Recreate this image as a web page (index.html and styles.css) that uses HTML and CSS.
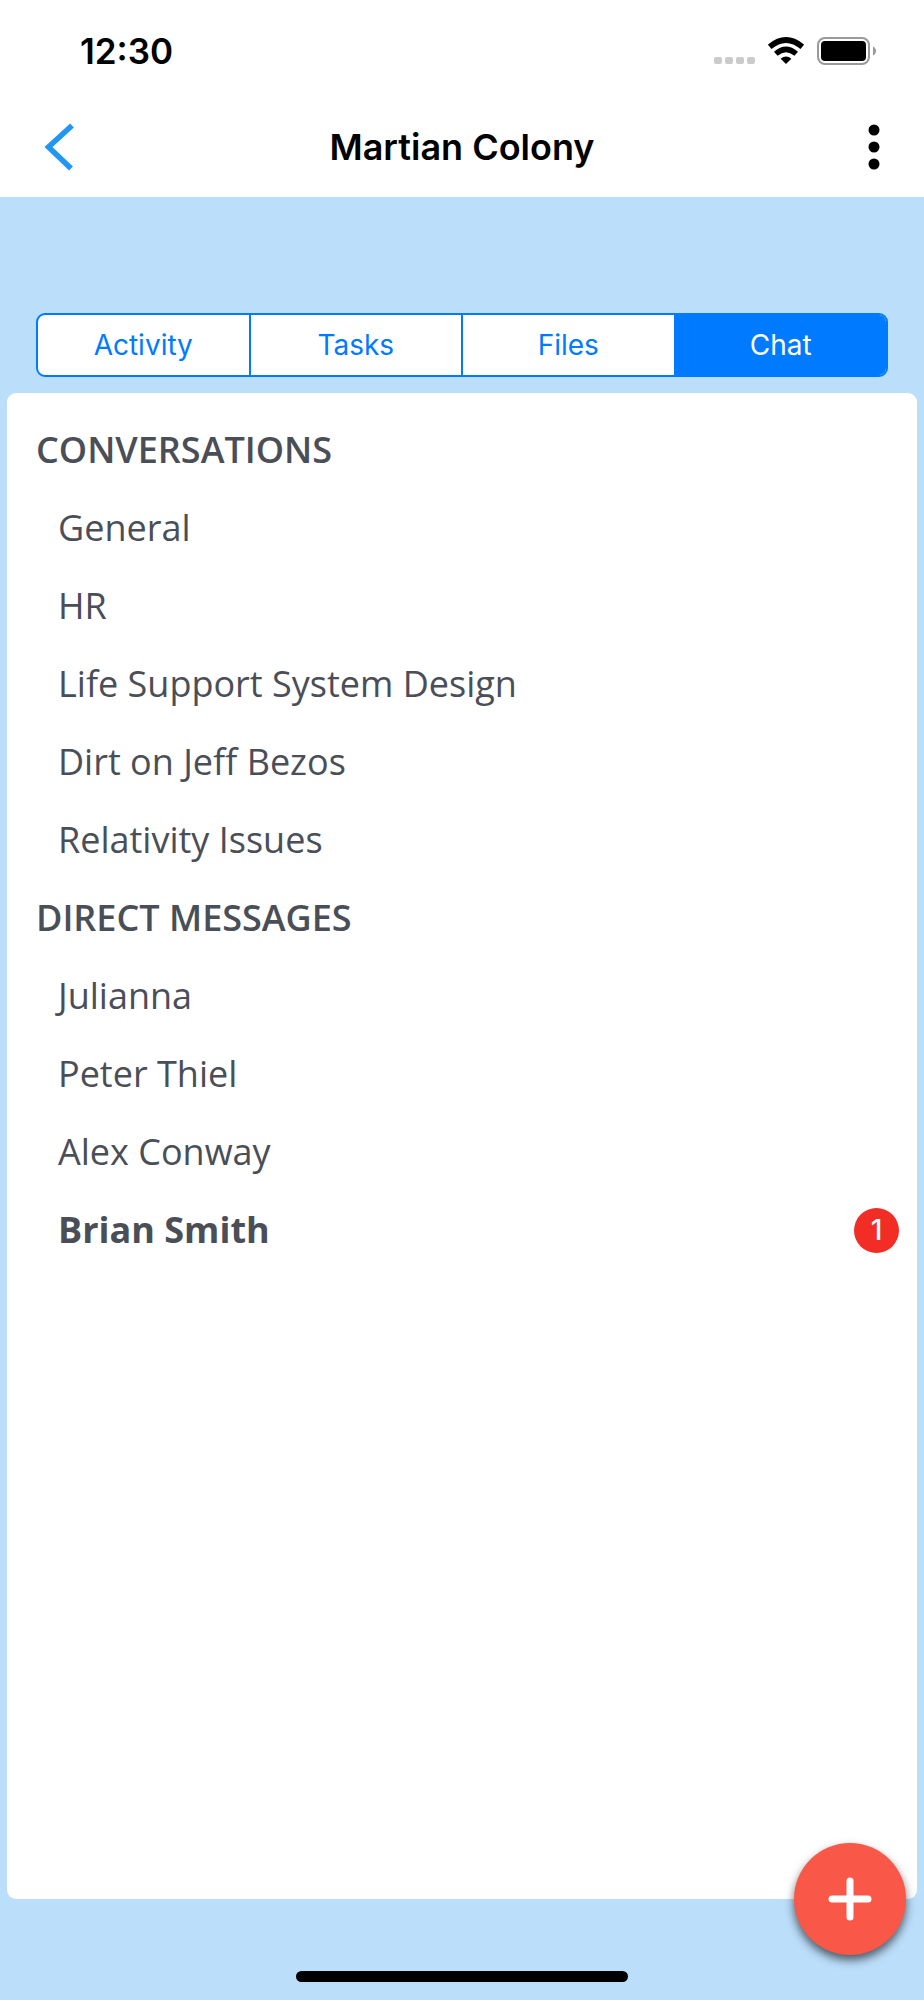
FILE: index.html
```html
<!DOCTYPE html>
<html lang="en">
<head>
    <meta charset="UTF-8">
    <meta name="viewport" content="width=device-width, initial-scale=1.0">
    <title>Martian Colony</title>
    <link rel="stylesheet" href="styles.css">
</head>
<body>

<div class="screen">
    <!-- Status bar -->
    <div class="status-bar">
        <span class="time">12:30</span>
        <div class="status-icons">
            <svg width="41" height="8" viewBox="0 0 41 8" fill="#cbcbcb">
                <rect x="0" y="0" width="8" height="7" rx="2"/>
                <rect x="11" y="0" width="8" height="7" rx="2"/>
                <rect x="22" y="0" width="8" height="7" rx="2"/>
                <rect x="33" y="0" width="8" height="7" rx="2"/>
            </svg>
            <svg width="36" height="28" viewBox="0 0 36 28">
                <path d="M1.7 9.8 Q18 -3.8 34.3 9.8" fill="none" stroke="#000" stroke-width="5.6"/>
                <path d="M7.8 16.8 Q18 8 28.2 16.8" fill="none" stroke="#000" stroke-width="5.4"/>
                <path d="M18 27 L12.6 21.8 Q18 17 23.4 21.8 Z"/>
            </svg>
            <svg width="59" height="28" viewBox="0 0 59 28">
                <rect x="1" y="1" width="51" height="26" rx="7" fill="none" stroke="#9a9a9a" stroke-width="2"/>
                <rect x="4" y="4" width="45" height="20" rx="4"/>
                <path d="M56 9.5 Q59 11 59 14 Q59 17 56 18.5 Z" fill="#9a9a9a"/>
            </svg>
        </div>
    </div>

    <!-- Header -->
    <header class="header">
        <button class="icon-btn" aria-label="Back">
            <svg width="30" height="48" viewBox="0 0 30 48">
                <path d="M28 2.5 L4.5 24 L27 45.5" fill="none" stroke="#2196f3" stroke-width="5.5"/>
            </svg>
        </button>
        <h1>Martian Colony</h1>
        <button class="icon-btn" aria-label="More">
            <svg width="12" height="46" viewBox="0 0 12 46">
                <circle cx="6" cy="6" r="5.5"/>
                <circle cx="6" cy="23" r="5.5"/>
                <circle cx="6" cy="40" r="5.5"/>
            </svg>
        </button>
    </header>

    <!-- Tabs -->
    <nav class="tabs">
        <button class="tab">Activity</button>
        <button class="tab">Tasks</button>
        <button class="tab">Files</button>
        <button class="tab active">Chat</button>
    </nav>

    <!-- Chat list -->
    <main class="panel">
        <section class="group">
            <h2>CONVERSATIONS</h2>
            <ul>
                <li><a href="#">General</a></li>
                <li><a href="#">HR</a></li>
                <li><a href="#">Life Support System Design</a></li>
                <li><a href="#">Dirt on Jeff Bezos</a></li>
                <li><a href="#">Relativity Issues</a></li>
            </ul>
        </section>
        <section class="group">
            <h2>DIRECT MESSAGES</h2>
            <ul>
                <li><a href="#">Julianna</a></li>
                <li><a href="#">Peter Thiel</a></li>
                <li><a href="#">Alex Conway</a></li>
                <li><a class="unread" href="#">Brian Smith <span class="badge">1</span></a></li>
            </ul>
        </section>
    </main>

    <footer class="bottom">
        <div class="home-bar"></div>
    </footer>

    <button class="fab" aria-label="New conversation">
        <svg width="44" height="44" viewBox="0 0 44 44">
            <path d="M22 4 V40 M4 22 H40" stroke="#fff" stroke-width="7" stroke-linecap="round"/>
        </svg>
    </button>
</div>

</body>
</html>
```

FILE: styles.css
```css
* {
    box-sizing: border-box;
}

body {
    margin: 0;
    font-family: "Inter", sans-serif;
    background: #bbdefb;
    color: #000;
}

button {
    font-family: inherit;
    padding: 0;
    border: none;
    background: none;
    cursor: pointer;
}

svg {
    display: block;
}

.screen {
    position: relative;
    display: flex;
    flex-direction: column;
    min-height: 100vh;
}

/* Status bar */
.status-bar {
    display: flex;
    justify-content: space-between;
    align-items: center;
    height: 101px;
    padding: 0 48px 0 80px;
    background: #fff;
}

.time {
    font-size: 35px;
    font-weight: 600;
}

.status-icons {
    display: flex;
    align-items: flex-end;
    gap: 13px;
}

/* Header */
.header {
    display: flex;
    justify-content: space-between;
    align-items: center;
    height: 96px;
    padding: 0 44px 4px;
    background: #fff;
}

.header h1 {
    margin: 0;
    font-size: 36px;
    font-weight: 600;
}

.icon-btn {
    display: flex;
    width: 30px;
}

.icon-btn:last-child {
    justify-content: flex-end;
}

/* Tabs */
.tabs {
    display: flex;
    height: 64px;
    margin: 116px 36px 16px;
    border: 2px solid #007aff;
    border-radius: 9px;
    background: #fff;
    overflow: hidden;
}

.tab {
    flex: 1;
    border-right: 2px solid #007aff;
    font-size: 28px;
    color: #007aff;
}

.tab:last-child {
    border-right: none;
}

.tab.active {
    background: #007aff;
    color: #fff;
}

/* Chat list */
.panel {
    flex: 1;
    margin: 0 7px;
    padding: 18px 18px 18px 29px;
    border-radius: 9px;
    background: #fff;
    font-family: "Open Sans", sans-serif;
    font-size: 36px;
    line-height: 78px;
    color: #4a4e57;
}

.group h2 {
    margin: 0;
    font-size: 36px;
    font-weight: 600;
}

.group ul {
    margin: 0;
    padding: 0 0 0 22px;
    list-style: none;
}

.group a {
    display: flex;
    justify-content: space-between;
    align-items: center;
    color: inherit;
    text-decoration: none;
}

.group .unread {
    font-weight: 700;
}

.badge {
    width: 45px;
    height: 45px;
    border-radius: 50%;
    background: #f12d26;
    color: #fff;
    font-family: "Inter", sans-serif;
    font-size: 28px;
    font-weight: 500;
    line-height: 45px;
    text-align: center;
}

/* Bottom area */
.bottom {
    display: flex;
    justify-content: center;
    align-items: flex-end;
    height: 101px;
    padding-bottom: 18px;
}

.home-bar {
    width: 36%;
    height: 11px;
    border-radius: 6px;
    background: #000;
}

/* Floating button */
.fab {
    position: absolute;
    right: 18px;
    bottom: 45px;
    display: flex;
    justify-content: center;
    align-items: center;
    width: 112px;
    height: 112px;
    border-radius: 50%;
    background: #f95747;
    box-shadow: 0 5px 10px rgba(0, 0, 0, 0.6);
}
```
